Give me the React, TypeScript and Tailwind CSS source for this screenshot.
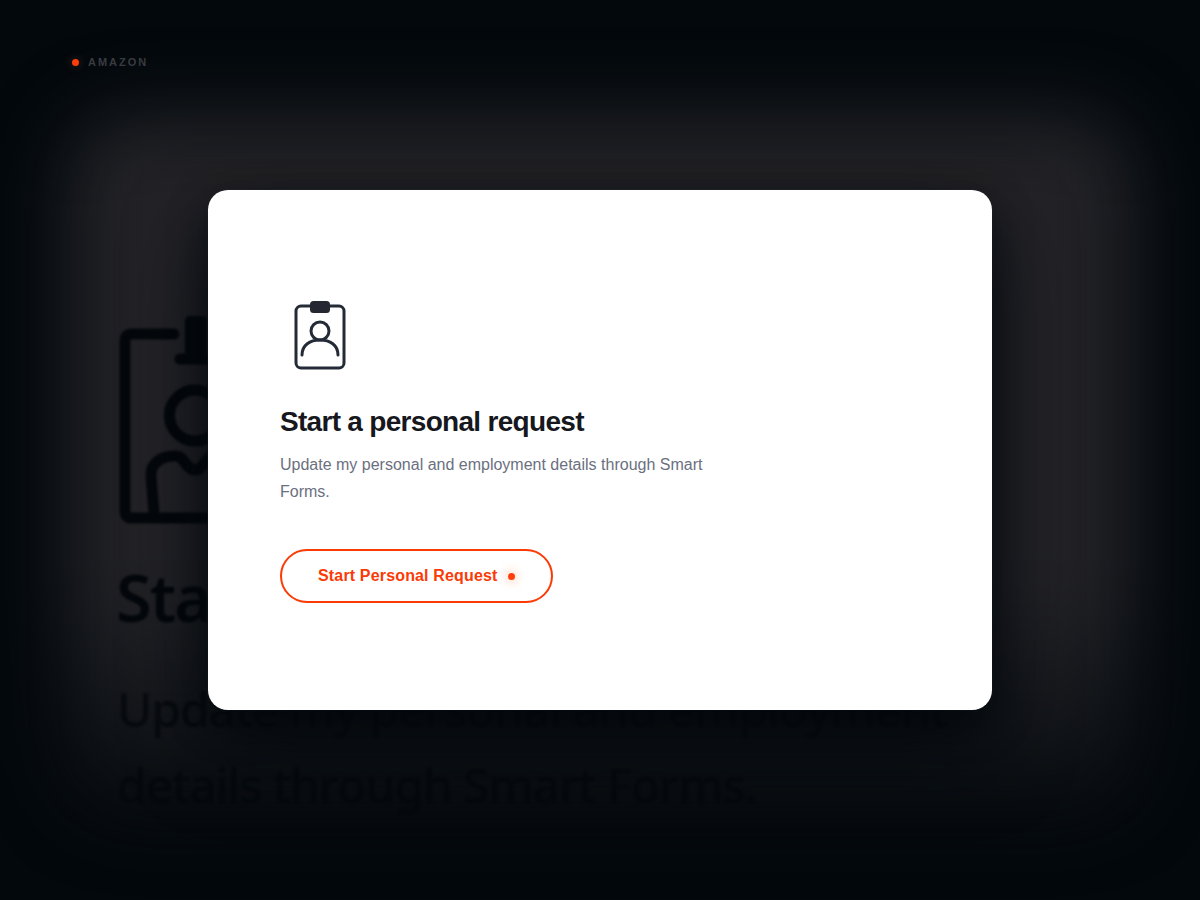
import React from 'react';

type TDotProps = {
    className?: string;
}

const Dot = ({ className }: TDotProps) =>
    <span className={`block size-[7px] rounded-full bg-[#ff3d0a] ${className ?? ''}`} />;

const BadgeIcon = () =>
    <svg width="80" height="80" viewBox="0 0 80 80" fill="none" stroke="#252b36" strokeWidth="3" strokeLinecap="round">
        <rect x="16" y="11" width="48" height="62" rx="5" />
        <circle cx="40" cy="36" r="9" />
        <path d="M22 60C22 50 30 45 40 45S58 50 58 60" />
        <rect x="30" y="6" width="20" height="12" rx="3.5" fill="#252830" stroke="none" />
    </svg>;

const BackdropIcon = () =>
    <svg width="160" height="210" viewBox="0 0 160 210" fill="none" stroke="#04080c" strokeWidth="11" strokeLinecap="round" strokeLinejoin="round" className="blur-[1px]">
        <path d="M56 19H14Q7 19 7 26V196Q7 203 14 203H140Q147 203 147 196V26Q147 19 140 19H98" />
        <path d="M62 44H92" />
        <rect x="67" y="1" width="22" height="40" rx="5" fill="#04080c" stroke="none" />
        <circle cx="77" cy="100.500" r="25.500" />
        <path d="M36 198L33 161C32 149 43 140 59 141C65 141 69 155 77 155S89 141 95 141C111 140 122 149 121 161L118 198" />
    </svg>;

const Backdrop = () =>
    <div className="grid h-full w-full" aria-hidden="true">
        <div className="col-start-1 row-start-1 mt-[116px] mb-[92px] mx-[68px] rounded-[60px] bg-linear-to-b from-[#232327] from-68% to-[#0b0f13] to-98% blur-[38px]" />
        <div className="col-start-1 row-start-1 z-10 flex flex-col px-[118px] pt-[315px] font-['Noto_Sans',sans-serif]">
            <BackdropIcon />
            <div className="mt-[27px] -ml-[2px] text-[65px] leading-[90px] font-semibold tracking-[-2px] text-[#04080c] whitespace-nowrap blur-[1px]">
                Start
            </div>
            <div className="mt-[29px] -ml-[1px] w-[900px] text-[48px] leading-[76px] font-medium tracking-[-1.15px] text-[#04080c]/75 blur-[1px]">
                Update my personal and employment<br />details through Smart Forms.
            </div>
        </div>
    </div>;

const Brand = () =>
    <div className="absolute top-[54px] left-[72px] z-20 flex items-center gap-[9px]">
        <Dot className="shadow-[0_0_10px_2px_rgba(255,150,100,0.12)]" />
        <span className="text-[11px] leading-4 font-bold tracking-[1.98px] text-[#393b40]">AMAZON</span>
    </div>;

const RequestCard = () =>
    <section className="flex h-[520px] w-[784px] flex-col items-start justify-center rounded-[20px] bg-white px-[72px] pb-[2px] shadow-[0_40px_80px_rgba(3,8,12,0.9),0_12px_36px_rgba(3,8,12,0.6),0_0_0_1px_rgba(42,43,50,0.65)]">
        <BadgeIcon />
        <h1 className="mt-[30px] text-[28px] leading-[34px] font-bold tracking-[-0.7px] text-[#16181d]">
            Start a personal request
        </h1>
        <p className="mt-3 max-w-[440px] text-base leading-[27px] text-[#6b7080]">
            Update my personal and employment details through Smart Forms.
        </p>
        <button className="mt-[44px] flex h-[54px] w-[273px] items-center gap-[10px] rounded-full border-2 border-[#fb3a05] pl-9 text-base font-bold tracking-[0.16px] text-[#fb3a05]">
            Start Personal Request
            <Dot className="mt-px shadow-[0_0_9px_3px_rgba(255,110,40,0.22)]" />
        </button>
    </section>;

export default function App() {
    return <main className="relative h-[900px] w-[1200px] overflow-hidden bg-[#03080c] font-['Liberation_Sans',sans-serif]">
        <Backdrop />
        <Brand />
        <div className="absolute inset-0 z-10 flex items-center justify-center">
            <RequestCard />
        </div>
    </main>;
}
